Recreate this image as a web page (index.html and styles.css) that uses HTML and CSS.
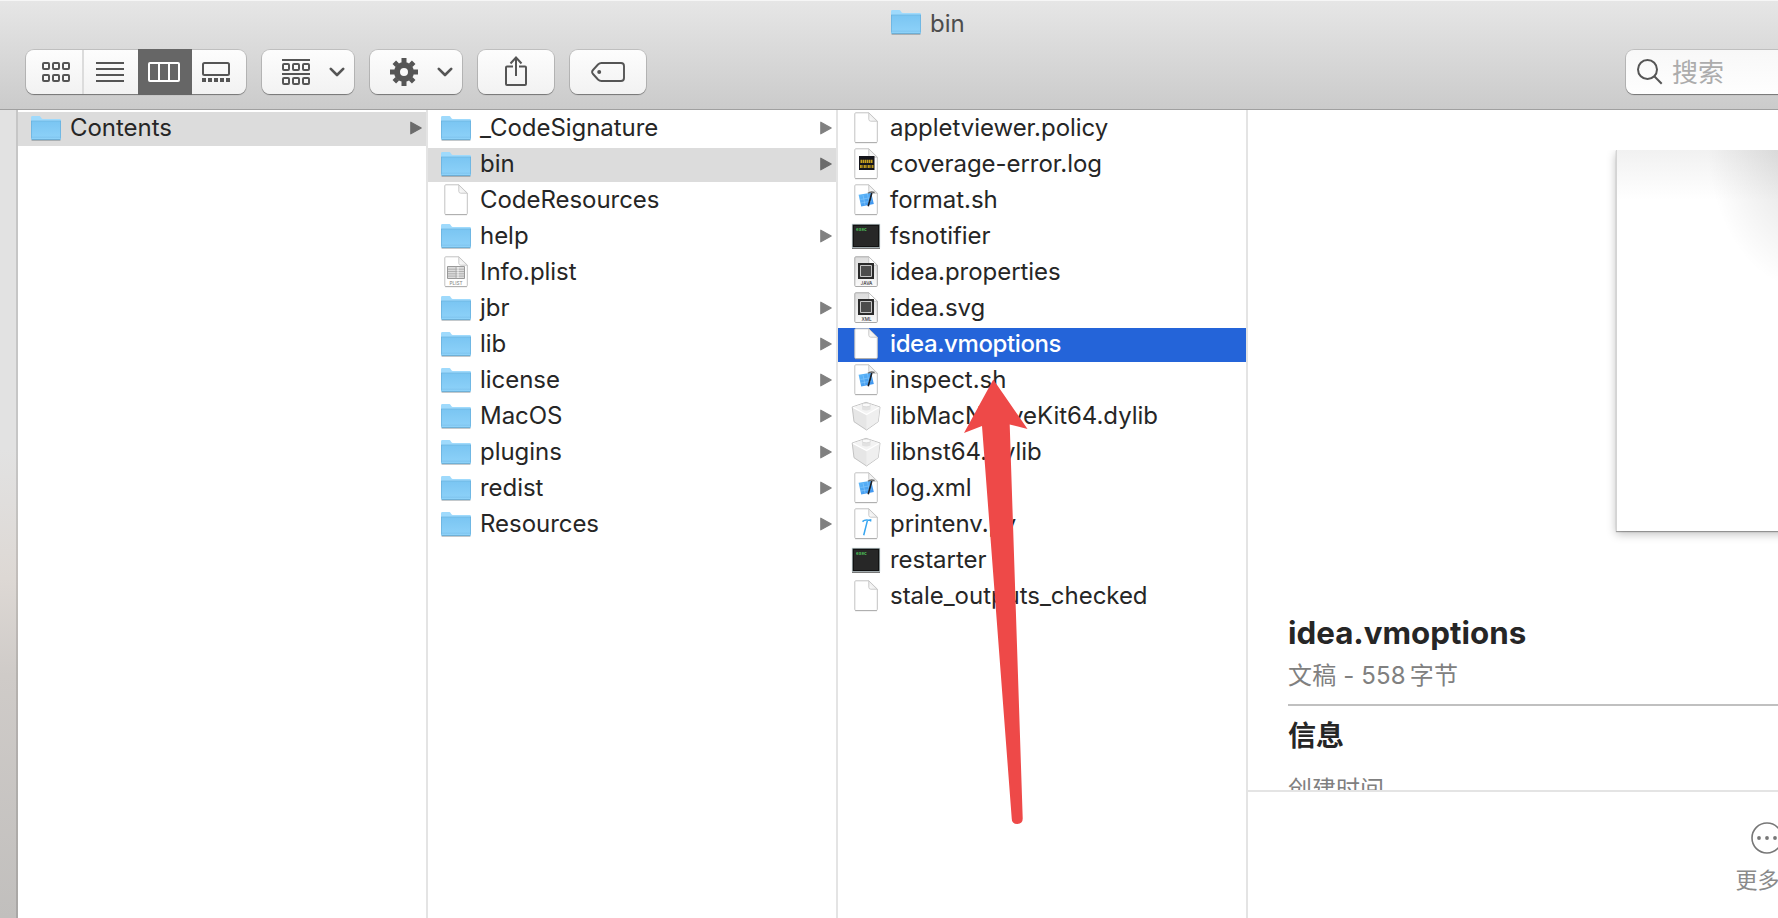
FILE: index.html
```html
<!DOCTYPE html>
<html lang="zh-CN">
<head>
<meta charset="utf-8">
<title>bin</title>
<link rel="stylesheet" href="styles.css">
</head>
<body>
<svg class="defs" aria-hidden="true">
  <defs>
    <linearGradient id="folder-fill" x1="0" y1="0" x2="0" y2="1"><stop offset="0" stop-color="#7ac5f2"/><stop offset="1" stop-color="#8ed2f9"/></linearGradient>
    <linearGradient id="fold-fill" x1="0" y1="1" x2="1" y2="0"><stop offset="0" stop-color="#fff"/><stop offset="1" stop-color="#ddd"/></linearGradient>
    <linearGradient id="gray-page" x1="0" y1="0" x2="0" y2="1"><stop offset="0" stop-color="#dcdcdc"/><stop offset="1" stop-color="#fafafa"/></linearGradient>
    <linearGradient id="blue-fill" x1="0" y1="0" x2="1" y2="1"><stop offset="0" stop-color="#62bbf9"/><stop offset="1" stop-color="#3a90ee"/></linearGradient>
  </defs>
  <symbol id="folder" viewBox="0 0 30 34">
    <path d="M.6 28.2h28.8" stroke="#000" stroke-opacity=".22" stroke-width="1.4"/>
    <path d="M0 5.4Q0 4 1.4 4h7.2c1 0 1.6 2.9 3 2.9h17q1.4 0 1.4 1.4V12H0z" fill="#9fdafc"/>
    <path d="M0 9h30v17.6q0 1.2-1.2 1.2H1.2Q0 27.800 0 26.600z" fill="url(#folder-fill)"/>
    <path d="M0 9h30" stroke="#70b8e2" stroke-width=".8"/>
    <path d="M.4 9v17.400M29.600 9v17.400" stroke="#68b0dc" stroke-width=".8"/>
    <path d="M.5 25.200h29" stroke="#79c0ea" stroke-width=".6"/>
    <path d="M.6 27.600h28.8" stroke="#5a9fca" stroke-width=".8"/>
  </symbol>
  <symbol id="page" viewBox="0 0 30 34">
    <path d="M4.800.8h13L26.300 9.200v20.300q0 1-1 1H4.800q-1 0-1-1V1.800q0-1 1-1z" fill="#fff" stroke="#c2c2c2" stroke-width="1"/>
    <path d="M4.200 30.700h21.800" stroke="#a6a6a6" stroke-width=".8"/>
    <path d="M17.800.8L26.300 9.200h-6.500q-2-.1-2-2z" fill="url(#fold-fill)" stroke="#c4c4c4" stroke-width=".9"/>
  </symbol>
  <symbol id="gray" viewBox="0 0 30 34">
    <path d="M4.800.8h13L26.300 9.200v20.300q0 1-1 1H4.800q-1 0-1-1V1.800q0-1 1-1z" fill="url(#gray-page)" stroke="#a8a8a8" stroke-width="1"/>
    <path d="M17.800.8L26.300 9.200h-6.500q-2-.1-2-2z" fill="#fff" stroke="#bbb" stroke-width=".8"/>
    <rect x="7" y="7" width="16" height="16" fill="#2b2b2b"/>
    <path d="M9.500 9.500h11v11h-11z" fill="#4c4c4c" stroke="#d6d6d6" stroke-width=".9"/>
  </symbol>
  <symbol id="java" viewBox="0 0 30 34"><use href="#gray"/><text x="15.500" y="28.600" class="tiny dark">JAVA</text></symbol>
  <symbol id="xml" viewBox="0 0 30 34"><use href="#gray"/><text x="15.500" y="28.600" class="tiny dark">XML</text></symbol>
  <symbol id="plist" viewBox="0 0 30 34">
    <use href="#page"/>
    <path d="M6.500 10.500h17v12h-17z" fill="#dcdcdc" stroke="#999" stroke-width="1"/>
    <path d="M7 13.200h16M7 15.500h16M7 17.800h16M7 20.100h16M15 10.500v12" stroke="#aaa" stroke-width=".9"/>
    <path d="M17 11v11" stroke="#fff" stroke-width=".8"/>
    <text x="15" y="28.600" class="tiny">PLIST</text>
  </symbol>
  <symbol id="log" viewBox="0 0 30 34">
    <use href="#page"/>
    <rect x="8" y="8" width="15.500" height="14" fill="#15151c"/>
    <path d="M9.500 13.400h12.500" stroke="#c8a11e" stroke-width="3.400" stroke-dasharray="1.500 .5"/>
    <path d="M9 18.400h13.500" stroke="#c09a1c" stroke-width="3" stroke-dasharray="1.800 .6 1 .6"/>
  </symbol>
  <symbol id="xcode" viewBox="0 0 30 34">
    <use href="#page"/>
    <path d="M7.600 10.800l12.600-2 2.600 11.200-12.600 2.500z" fill="url(#blue-fill)"/>
    <path d="M9.500 15.500l11-2M10 19l11-2M12 11l2 10M16.500 10l2 10" stroke="#8ccbfa" stroke-width=".6"/>
    <path d="M17 9.300q2.500-2.200 6.600-.8" fill="none" stroke="#666" stroke-width="1.500"/>
    <path d="M20.800 9l-3.600 13.200" stroke="#1c1f26" stroke-width="1.600"/>
  </symbol>
  <symbol id="hammer" viewBox="0 0 30 34">
    <use href="#page"/>
    <path d="M11.500 13.600q2.500-2.500 6.300-1.300l1.800-.4v1.600M16.400 12.600L12.700 27.300" fill="none" stroke="#37a5f0" stroke-width="1.500"/>
  </symbol>
  <symbol id="exec" viewBox="0 0 30 34">
    <path d="M1 28.400h28" stroke="#777" stroke-width="1.200"/>
    <rect x="1.200" y="4.200" width="27.600" height="23.400" fill="#111" stroke="#b9c8cc" stroke-width=".7"/>
    <rect x="3" y="6" width="24" height="20" fill="#272727"/>
    <text x="5" y="10.800" class="prompt">exec</text>
  </symbol>
  <symbol id="dylib" viewBox="0 0 30 34">
    <path d="M1.200 7L15 2.300l14 4.700-1.800 14.700L15.500 30 3 21.700z" fill="#e6e6e6" stroke="#bcbcbc" stroke-width=".9" stroke-linejoin="round"/>
    <path d="M1.500 7.200L15 2.700l13.700 4.500L15.500 14.500z" fill="#f3f3f3"/>
    <path d="M15.500 14.500L28.700 7.200 27 21.500l-11.500 8z" fill="#efefef"/>
    <path d="M2 7.400l13.500 7.100L28 7.400" fill="none" stroke="#fff" stroke-width="1.200"/>
    <path d="M11 5v4.500q4 2.200 8.500 0V5z" fill="#e2e2e2"/>
    <ellipse cx="15.300" cy="5" rx="4.300" ry="1.800" fill="#fafafa" stroke="#ccc" stroke-width=".6"/>
  </symbol>
  <symbol id="more-arrow" viewBox="0 0 12 14"><path d="M.8 1.200v11.600L11.200 7z" fill="currentColor" stroke="currentColor" stroke-width="1.200" stroke-linejoin="round"/></symbol>
  <symbol id="chevron" viewBox="0 0 16 10"><path d="M1.800 1.800L8 8l6.200-6.200" fill="none" stroke="#555" stroke-width="2.600" stroke-linecap="round" stroke-linejoin="round"/></symbol>
</svg>

<div class="window">
  <header class="toolbar">
    <div class="title"><svg class="icon"><use href="#folder"/></svg><span>bin</span></div>
    <div class="controls">
      <div class="segments button">
        <div class="seg seg-icons"><svg width="28" height="20" viewBox="0 0 28 20" fill="none" stroke="#555" stroke-width="2"><rect x="1" y="1" width="6" height="6" rx="1"/><rect x="11" y="1" width="6" height="6" rx="1"/><rect x="21" y="1" width="6" height="6" rx="1"/><rect x="1" y="13" width="6" height="6" rx="1"/><rect x="11" y="13" width="6" height="6" rx="1"/><rect x="21" y="13" width="6" height="6" rx="1"/></svg></div>
        <div class="seg seg-list"><svg width="28" height="20" viewBox="0 0 28 20"><path d="M0 1h28M0 7h28M0 13h28M0 19h28" stroke="#555" stroke-width="2"/></svg></div>
        <div class="seg seg-columns"><svg width="32" height="20" viewBox="0 0 32 20" fill="none" stroke="#fff" stroke-width="2"><rect x="1" y="1" width="30" height="18" rx="1"/><path d="M11 1v18M21 1v18"/></svg></div>
        <div class="seg seg-gallery"><svg width="28" height="20" viewBox="0 0 28 20"><rect x="1" y="1" width="26" height="12" rx="1.500" fill="none" stroke="#555" stroke-width="2"/><path d="M0 18h28" stroke="#555" stroke-width="4" stroke-dasharray="4 2"/></svg></div>
      </div>
      <div class="button menu">
        <svg width="28" height="26" viewBox="0 0 28 26" fill="none" stroke="#555" stroke-width="2"><path d="M0 1h28M0 15h28"/><rect x="1" y="5" width="6" height="6" rx="1"/><rect x="11" y="5" width="6" height="6" rx="1"/><rect x="21" y="5" width="6" height="6" rx="1"/><rect x="1" y="19" width="6" height="6" rx="1"/><rect x="11" y="19" width="6" height="6" rx="1"/><rect x="21" y="19" width="6" height="6" rx="1"/></svg>
        <svg class="chevron"><use href="#chevron"/></svg>
      </div>
      <div class="button menu">
        <svg width="28" height="28" viewBox="-14 -14 28 28" fill="none" stroke="#555"><circle r="7" stroke-width="6"/><g stroke-width="5"><path d="M0-14v5M0 14v-5M-14 0h5M14 0h-5"/><path d="M-9.700-9.700l3 3M9.700-9.700l-3 3M-9.700 9.700l3-3M9.700 9.700l-3-3"/></g></svg>
        <svg class="chevron"><use href="#chevron"/></svg>
      </div>
      <div class="button single">
        <svg class="share" width="24" height="32" viewBox="0 0 24 32" fill="none" stroke="#555" stroke-width="2"><path d="M9 11.500H3q-1 0-1 1V29q0 1 1 1h18q1 0 1-1V12.500q0-1-1-1h-6M12 21V3M6.500 8.500L12 2.500l5.500 6"/></svg>
      </div>
      <div class="button single">
        <svg width="34" height="20" viewBox="0 0 34 20"><path d="M10.500 1H30q3 0 3 3v12q0 3-3 3H10.500q-2 0-3.500-1.500l-5-5.500q-1.800-2 0-4L7 2.500Q8.500 1 10.500 1z" fill="none" stroke="#555" stroke-width="1.900"/><circle cx="8.200" cy="10" r="2" fill="#555"/></svg>
      </div>
      <div class="search">
        <svg width="26" height="26" viewBox="0 0 26 26" fill="none" stroke="#555" stroke-width="2"><circle cx="10.500" cy="10.500" r="9.500"/><path d="M17.300 17.300l7.400 7.400"/></svg>
        <span>搜索</span>
      </div>
    </div>
  </header>

  <main class="browser">
    <div class="sidebar"></div>
    <section class="column">
      <div class="row current"><svg class="icon"><use href="#folder"/></svg><span>Contents</span><svg class="more"><use href="#more-arrow"/></svg></div>
    </section>
    <section class="column">
      <div class="row"><svg class="icon"><use href="#folder"/></svg><span>_CodeSignature</span><svg class="more"><use href="#more-arrow"/></svg></div>
      <div class="row current"><svg class="icon"><use href="#folder"/></svg><span>bin</span><svg class="more"><use href="#more-arrow"/></svg></div>
      <div class="row"><svg class="icon"><use href="#page"/></svg><span>CodeResources</span></div>
      <div class="row"><svg class="icon"><use href="#folder"/></svg><span>help</span><svg class="more"><use href="#more-arrow"/></svg></div>
      <div class="row"><svg class="icon"><use href="#plist"/></svg><span>Info.plist</span></div>
      <div class="row"><svg class="icon"><use href="#folder"/></svg><span>jbr</span><svg class="more"><use href="#more-arrow"/></svg></div>
      <div class="row"><svg class="icon"><use href="#folder"/></svg><span>lib</span><svg class="more"><use href="#more-arrow"/></svg></div>
      <div class="row"><svg class="icon"><use href="#folder"/></svg><span>license</span><svg class="more"><use href="#more-arrow"/></svg></div>
      <div class="row"><svg class="icon"><use href="#folder"/></svg><span>MacOS</span><svg class="more"><use href="#more-arrow"/></svg></div>
      <div class="row"><svg class="icon"><use href="#folder"/></svg><span>plugins</span><svg class="more"><use href="#more-arrow"/></svg></div>
      <div class="row"><svg class="icon"><use href="#folder"/></svg><span>redist</span><svg class="more"><use href="#more-arrow"/></svg></div>
      <div class="row"><svg class="icon"><use href="#folder"/></svg><span>Resources</span><svg class="more"><use href="#more-arrow"/></svg></div>
    </section>
    <section class="column">
      <div class="row"><svg class="icon"><use href="#page"/></svg><span>appletviewer.policy</span></div>
      <div class="row"><svg class="icon"><use href="#log"/></svg><span>coverage-error.log</span></div>
      <div class="row"><svg class="icon"><use href="#xcode"/></svg><span>format.sh</span></div>
      <div class="row"><svg class="icon"><use href="#exec"/></svg><span>fsnotifier</span></div>
      <div class="row"><svg class="icon"><use href="#java"/></svg><span>idea.properties</span></div>
      <div class="row"><svg class="icon"><use href="#xml"/></svg><span>idea.svg</span></div>
      <div class="row selected"><svg class="icon"><use href="#page"/></svg><span>idea.vmoptions</span></div>
      <div class="row"><svg class="icon"><use href="#xcode"/></svg><span>inspect.sh</span></div>
      <div class="row"><svg class="icon"><use href="#dylib"/></svg><span>libMacNativeKit64.dylib</span></div>
      <div class="row"><svg class="icon"><use href="#dylib"/></svg><span>libnst64.dylib</span></div>
      <div class="row"><svg class="icon"><use href="#xcode"/></svg><span>log.xml</span></div>
      <div class="row"><svg class="icon"><use href="#hammer"/></svg><span>printenv.py</span></div>
      <div class="row"><svg class="icon"><use href="#exec"/></svg><span>restarter</span></div>
      <div class="row"><svg class="icon"><use href="#page"/></svg><span>stale_outputs_checked</span></div>
    </section>
    <section class="preview">
      <div class="details">
        <div class="thumb"><div class="paper"></div></div>
        <h1 class="name">idea.vmoptions</h1>
        <p class="kind">文稿 - 558<span class="unit">字节</span></p>
        <h2 class="info">信息</h2>
        <p class="field">创建时间</p>
      </div>
      <div class="actions">
        <svg width="32" height="32" viewBox="0 0 32 32"><circle cx="16" cy="16" r="15" fill="none" stroke="#777" stroke-width="1.600"/><circle cx="8" cy="16" r="1.900" fill="#777"/><circle cx="16" cy="16" r="1.900" fill="#777"/><circle cx="24" cy="16" r="1.900" fill="#777"/></svg>
        <span>更多…</span>
      </div>
    </section>
  </main>
  <svg class="pointer" width="66" height="448" viewBox="0 0 66 448"><path d="M30.300 1.500L64.500 51l-17.800-4.500L59.700 440q.3 6-5.400 6t-5.600-6L19 48 1 55z" fill="#ee4948"/></svg>
</div>
</body>
</html>
```

FILE: styles.css
```css
* { box-sizing: border-box; }

body {
  margin: 0;
  font-family: Inter, "Noto Sans CJK SC", sans-serif;
  font-size: 24px;
  color: #262626;
  background: #fff;
}

p, h1, h2 { margin: 0; }

.defs { position: absolute; width: 0; height: 0; }

.window {
  position: relative;
  width: 1778px;
  height: 918px;
  overflow: hidden;
  display: flex;
  flex-direction: column;
}

/* Toolbar */
.toolbar {
  flex: none;
  height: 110px;
  border-top: 1px solid #f6f6f6;
  border-bottom: 1px solid #a0a0a0;
  background: linear-gradient(#e6e6e6, #cbcbcb);
  overflow: hidden;
}

.title {
  height: 49px;
  padding: 5px 0 0 891px;
  display: flex;
  align-items: flex-start;
  gap: 9px;
  line-height: 35px;
  color: #4d4d4d;
}

.icon { flex: none; display: block; width: 30px; height: 34px; }

.controls { width: 1866px; display: flex; padding-left: 26px; }

.button {
  flex: none;
  height: 44px;
  margin-right: 16px;
  display: flex;
  align-items: center;
  border-radius: 8px;
  background: linear-gradient(#fdfdfd, #f2f2f2);
  box-shadow: 0 0 0 1px rgba(0, 0, 0, .12), 0 1px 1px rgba(0, 0, 0, .35);
}

.segments { width: 220px; }
.seg { height: 44px; display: flex; align-items: center; }
.seg-icons { width: 58px; padding-left: 16px; border-right: 2px solid #dcdcdc; }
.seg-list { width: 54px; padding-left: 12px; }
.seg-columns { width: 54px; height: 46px; padding-left: 10px; background: #666; }
.seg-gallery { width: 54px; padding-left: 10px; }

.menu { width: 92px; padding-left: 20px; gap: 19px; }
.chevron { width: 16px; height: 10px; }
.single { width: 76px; justify-content: center; }
.share { margin-bottom: 3px; }

.search {
  width: 240px;
  height: 44px;
  margin-left: auto;
  padding-left: 11px;
  display: flex;
  align-items: center;
  gap: 9px;
  border-radius: 8px;
  background: linear-gradient(#f8f8f8, #fefefe);
  box-shadow: 0 0 0 1px rgba(0, 0, 0, .12), 0 1px 1px rgba(0, 0, 0, .35);
  font-size: 26px;
  line-height: 44px;
  color: #acacac;
}

.search span { padding-top: 2px; }

/* Columns */
.browser { flex: 1; min-height: 0; display: flex; }

.sidebar {
  flex: none;
  width: 18px;
  border-right: 2px solid rgba(0, 0, 0, .12);
  background: linear-gradient(#e2e2e2 0, #e2e2e2 42%, #ddd8d4 58%, #cfcbc8 70%, #c1bfbd 100%);
}

.column {
  flex: none;
  width: 410px;
  padding-top: 2px;
  border-right: 2px solid #e4e4e4;
  display: flex;
  flex-direction: column;
  gap: 2px;
}

.row {
  height: 34px;
  padding: 0 4px 0 13px;
  display: flex;
  align-items: center;
  line-height: 32px;
  white-space: nowrap;
}

.row span { margin-left: 9px; padding-bottom: 2px; letter-spacing: -.04px; }
.more { width: 12px; height: 14px; margin: -2px 0 0 auto; color: #808080; }
.current { background: #dcdcdc; }
.current .more { color: #6c6c6c; }
.selected { background: #2464d9; color: #fff; font-weight: 500; }
.selected span { letter-spacing: -.4px; }

.tiny { font: 500 4.700px Inter, sans-serif; fill: #888; text-anchor: middle; }
.dark { fill: #333; }
.prompt { font: bold 4.500px "Liberation Mono", monospace; fill: #4fc65a; }

/* Preview */
.preview { flex: 1; min-width: 0; display: flex; flex-direction: column; }

.details {
  flex: none;
  height: 682px;
  padding: 40px 0 0 40px;
  border-bottom: 2px solid #e4e4e4;
  overflow: hidden;
}

.thumb { height: 400px; padding-left: 328px; overflow: hidden; }

.paper {
  width: 240px;
  height: 381px;
  border-left: 1px solid #d4d4d4;
  background:
    radial-gradient(ellipse 100px 150px at 190px -10px, rgba(0, 0, 0, .14), transparent),
    linear-gradient(#f1f1f1, #fff 50px);
  box-shadow: 0 1px 1px rgba(0, 0, 0, .3), 0 3px 9px rgba(0, 0, 0, .25);
}

.name {
  height: 104px;
  padding-top: 62px;
  font-size: 31.300px;
  line-height: 42px;
  font-weight: 700;
}

.kind {
  height: 52px;
  padding-top: 4px;
  line-height: 36px;
  letter-spacing: .15px;
  color: #808080;
  border-bottom: 2px solid #c0c0c0;
}

.unit { margin-left: 4px; }
.info { padding-top: 10px; font-size: 28px; line-height: 40px; font-weight: 700; }
.field { padding-top: 16px; line-height: 36px; color: #808080; }

.actions {
  width: 62px;
  margin: 30px 0 0 488px;
  display: flex;
  flex-direction: column;
  align-items: center;
  gap: 10px;
  font-size: 22px;
  line-height: 32px;
  color: #8a8a8a;
  white-space: nowrap;
}

/* Red annotation arrow over the file list */
.pointer { position: absolute; left: 963px; top: 378px; }
```
